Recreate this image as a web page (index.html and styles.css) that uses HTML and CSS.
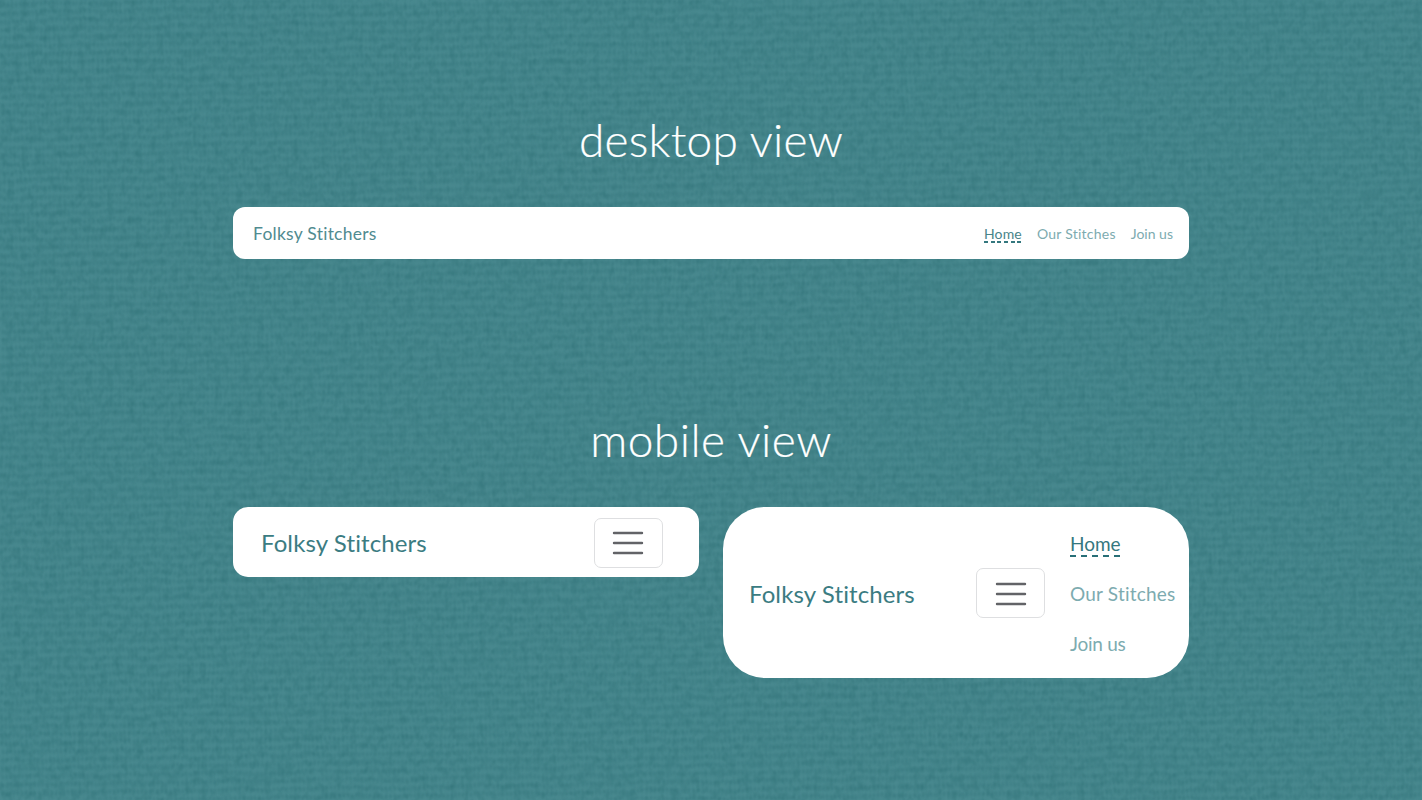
FILE: index.html
```html
<!DOCTYPE html>
<html lang="en">
<head>
<meta charset="utf-8">
<title>Folksy Stitchers</title>
<link rel="stylesheet" href="styles.css">
</head>
<body>
<svg class="cloth" width="1422" height="800" aria-hidden="true">
  <defs>
    <pattern id="weave" width="8" height="8.4" patternUnits="userSpaceOnUse" patternTransform="rotate(-1)">
      <path d="M0 .5h8" stroke="#569399" stroke-width="2" opacity=".2"/>
      <path d="M1 0v8.4M5 0v8.4" stroke="#286e77" stroke-width="1.5" opacity=".2"/>
      <path d="M1 3v3.4M5 2.5v3.4" stroke="#205f6a" stroke-width="2" opacity=".32"/>
    </pattern>
    <filter id="fibre" x="0" y="0" width="100%" height="100%" color-interpolation-filters="sRGB">
      <feTurbulence type="fractalNoise" baseFrequency=".03" numOctaves="2" seed="7" result="n"/>
      <feDisplacementMap in="SourceGraphic" in2="n" scale="6" xChannelSelector="R" yChannelSelector="G"/>
      <feGaussianBlur stdDeviation=".8"/>
    </filter>
    <filter id="grain" x="0" y="0" width="100%" height="100%" color-interpolation-filters="sRGB">
      <feTurbulence type="fractalNoise" baseFrequency=".14 .12" numOctaves="2" seed="4"/>
      <feColorMatrix values="0 0 0 0 .16  0 0 0 0 .42  0 0 0 0 .44  1.8 0 0 0 -.75"/>
    </filter>
  </defs>
  <rect width="1422" height="800" fill="#49898f"/>
  <rect width="1422" height="800" fill="url(#weave)" filter="url(#fibre)"/>
  <rect width="1422" height="800" filter="url(#grain)" opacity=".42"/>
</svg>
<main class="stage">
  <section class="desktop">
    <h1 class="title title-desktop">desktop view</h1>
    <nav class="bar">
      <a class="brand brand-small">Folksy Stitchers</a>
      <div class="links">
        <a class="link active">Home</a><a class="link stitches">Our Stitches</a><a class="link">Join us</a>
      </div>
    </nav>
  </section>
  <section class="mobile">
    <h2 class="title title-mobile">mobile view</h2>
    <div class="pair">
      <nav class="panel closed">
        <a class="brand">Folksy Stitchers</a>
        <span class="toggle"><svg width="32" height="26" viewBox="0 0 32 26"><path d="M2 3h28M2 13h28M2 23h28"/></svg></span>
      </nav>
      <nav class="panel open">
        <a class="brand">Folksy Stitchers</a>
        <span class="toggle"><svg width="32" height="26" viewBox="0 0 32 26"><path d="M2 3h28M2 13h28M2 23h28"/></svg></span>
        <div class="menu">
          <a class="item active">Home</a>
          <a class="item stitches">Our Stitches</a>
          <a class="item">Join us</a>
        </div>
      </nav>
    </div>
  </section>
</main>
</body>
</html>
```
FILE: styles.css
```css
* { box-sizing: border-box; }
body { margin: 0; width: 1422px; height: 800px; overflow: hidden; background: #44848a; font-family: Lato, sans-serif; font-variant-ligatures: none; }
.cloth { position: absolute; inset: 0; z-index: -1; }
.stage { width: 956px; margin-left: 233px; padding-top: 107px; }
.desktop { height: 300px; }
.title { margin: 0; height: 100px; line-height: 66px; font-size: 46px; font-weight: 300; color: #fff; text-align: center; white-space: nowrap; letter-spacing: .25px; -webkit-text-stroke: .2px #fff; }
.title-mobile { letter-spacing: .5px; }
.bar { height: 52px; border-radius: 12px; background: #fff; display: flex; align-items: center; justify-content: space-between; padding: 2px 16px 0 20px; }
.brand { color: #3b7c82; font-size: 24px; line-height: 32px; letter-spacing: .11px; white-space: nowrap; }
.brand-small { font-size: 17.5px; letter-spacing: .25px; color: #508b90; }
.links { display: flex; gap: 15px; font-size: 14px; line-height: 18px; }
.link, .item { color: #7dabb0; white-space: nowrap; }
.link.active { color: #488489; letter-spacing: .15px; background: repeating-linear-gradient(90deg, #34777e 0 4px, transparent 4px 6.7px) left bottom / 100% 2px no-repeat; }
.link.stitches { letter-spacing: .25px; }
.pair { display: flex; align-items: flex-start; gap: 24px; }
.panel { background: #fff; display: flex; align-items: center; }
.closed { width: 466px; height: 70px; border-radius: 15px; justify-content: space-between; padding: 2px 36.5px 0 28px; }
.open { width: 466px; height: 171px; border-radius: 42px; padding: 2px 0 0 26px; }
.open .brand { width: 227px; }
.toggle { width: 69px; height: 50px; margin-top: -1px; border: 1px solid #dedfe1; border-radius: 7px; display: flex; align-items: center; justify-content: center; }
.toggle path { stroke: #626367; stroke-width: 2.4; stroke-linecap: round; }
.toggle svg { margin-top: 1px; }
.menu { margin-left: 25px; display: grid; grid-template-rows: repeat(3, 50px); align-items: center; justify-items: start; font-size: 19px; line-height: 26px; }
.item { letter-spacing: -.25px; }
.item.stitches { letter-spacing: .2px; }
.item.active { letter-spacing: 0; color: #34777e; background: repeating-linear-gradient(90deg, #286f77 0 6px, transparent 6px 11px) left bottom / 100% 2px no-repeat; }
```
